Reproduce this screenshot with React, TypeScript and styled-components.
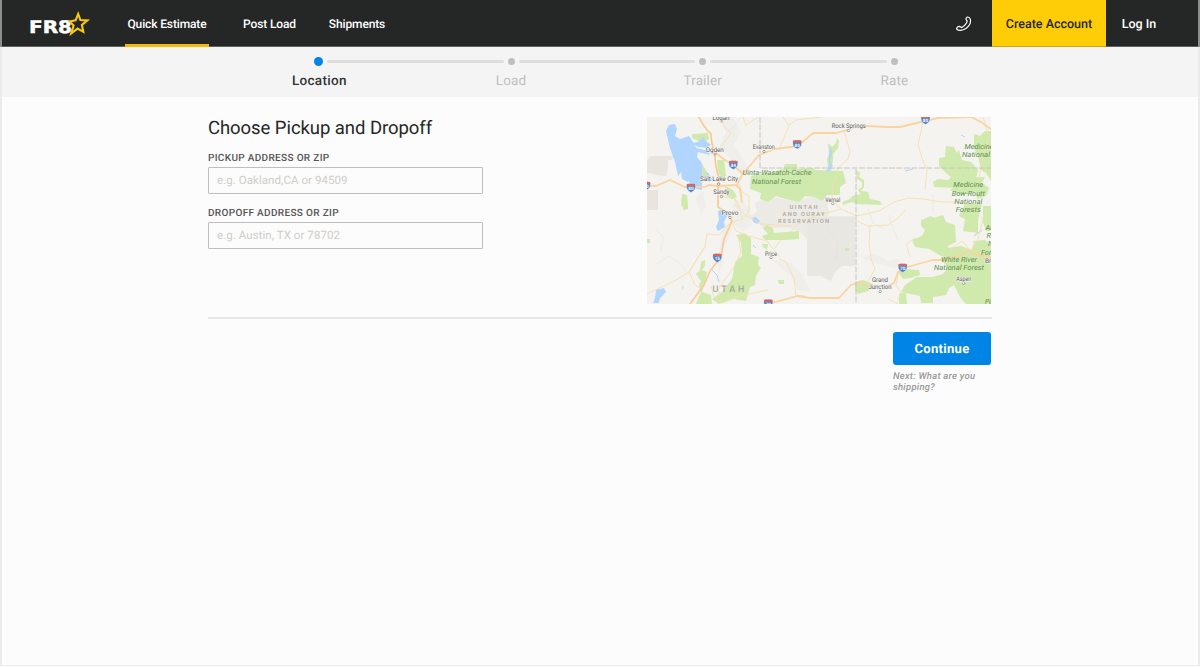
import React from "react";
import styled, { createGlobalStyle } from "styled-components";

const GlobalStyle = createGlobalStyle`
  *, *::before, *::after { box-sizing: border-box; }
  html, body { margin: 0; padding: 0; background: #fcfcfc; }
  body { font-family: Roboto, "Liberation Sans", sans-serif; color: #252726; overflow: hidden; text-rendering: geometricPrecision; }
  button, input { text-rendering: inherit; }
`;

const Page = styled.div`
  height: 666px;
  display: flex;
  flex-direction: column;
  border: solid #ebebeb;
  border-width: 0 2px 1px;
  background: #fcfcfc;
`;

const Header = styled.header`
  height: 47px;
  margin: 0 -2px;
  padding: 0 26px 0 28px;
  flex: none;
  display: flex;
  align-items: stretch;
  background: #252726;
  border: solid #8c8d8c;
  border-width: 0 2px;
  box-shadow: inset 0 -1px 0 #5e5f5e;
`;

const Logo = styled.svg`
  width: 62px;
  height: 46px;
  margin-right: 33px;
  flex: none;
`;

const Nav = styled.nav`
  display: flex;
  gap: 32px;
`;

const NavLink = styled.a<{ $active?: boolean; $width: number }>`
  width: ${(p) => p.$width}px;
  height: 47px;
  display: flex;
  align-items: center;
  justify-content: center;
  padding-top: ${(p) => (p.$active ? 4 : 1)}px;
  border-bottom: ${(p) => (p.$active ? "3px solid #f5b90c" : "0")};
  color: #fff;
  font-size: 12px;
  font-weight: 500;
  letter-spacing: -0.13px;
  white-space: nowrap;
`;

const Actions = styled.div`
  display: flex;
  align-items: stretch;
  margin-left: auto;
`;

const Phone = styled.svg`
  width: 18px;
  height: 18px;
  margin: 15px 19px 0 0;
`;

const CreateAccount = styled.button`
  width: 114px;
  border: 0;
  padding: 2px 0 0;
  background: #ffcd08;
  box-shadow: inset 0 -1px 0 #c9a520;
  color: #252726;
  font: 500 12.5px Roboto, sans-serif;
  letter-spacing: 0;
`;

const LogIn = styled.a`
  width: 66px;
  display: flex;
  align-items: center;
  justify-content: center;
  padding-top: 2px;
  color: #fff;
  font-size: 12.5px;
  font-weight: 500;
  letter-spacing: 0;
`;

const Progress = styled.section`
  height: 50px;
  flex: none;
  padding-top: 9px;
  background: #f4f4f4;
`;

const Track = styled.div`
  display: flex;
  align-items: center;
  width: 584px;
  height: 11px;
  margin-left: 312px;
`;

const Dot = styled.span<{ $active?: boolean }>`
  width: ${(p) => (p.$active ? 9 : 7)}px;
  height: ${(p) => (p.$active ? 9 : 7)}px;
  flex: none;
  border-radius: 50%;
  background: ${(p) => (p.$active ? "#0084e6" : "#bfbfbf")};
`;

const Bar = styled.span`
  flex: 1;
  height: 3px;
  margin: 0 4px;
  border-radius: 2px;
  background: #dedede;
`;

const StepLabels = styled.div`
  display: grid;
  grid-template-columns: repeat(4, 191.7px);
  margin: 6px 0 0 221.5px;
`;

const StepLabel = styled.span<{ $active?: boolean }>`
  text-align: center;
  font-size: 13.5px;
  line-height: 17px;
  font-weight: ${(p) => (p.$active ? 500 : 400)};
  letter-spacing: ${(p) => (p.$active ? 0.3 : 0.1)}px;
  color: ${(p) => (p.$active ? "#333" : "#c0c0c0")};
`;

const Main = styled.main`
  width: 784px;
  margin-left: 206px;
  padding-top: 20px;
`;

const Columns = styled.div`
  display: flex;
  justify-content: space-between;
  height: 202px;
  border-bottom: 2px solid #e7e7e7;
`;

const Form = styled.form`
  width: 275px;
`;

const Title = styled.h1`
  margin: 0 0 13px;
  font-size: 18.5px;
  line-height: 22px;
  font-weight: 400;
  letter-spacing: -0.06px;
  white-space: nowrap;
`;

const Field = styled.label`
  display: block;
  height: 55px;
`;

const FieldLabel = styled.span`
  display: block;
  height: 15px;
  padding-top: 1px;
  font-size: 10px;
  line-height: 12px;
  font-weight: 500;
  letter-spacing: 0.33px;
  color: #555;
`;

const Input = styled.input`
  display: block;
  width: 275px;
  height: 27px;
  padding: 0 8px 1px;
  border: 1px solid #bfbfbf;
  border-radius: 1px;
  outline: 0;
  background: #fcfcfc;
  font: 400 11.5px Roboto, sans-serif;
  letter-spacing: 0.06px;
  &::placeholder { color: #d0ccc8; opacity: 1; }
`;

const MapView = styled.svg`
  display: block;
  width: 344px;
  height: 187px;
  flex: none;
  margin-right: 1px;
`;

const Footer = styled.div`
  display: flex;
  flex-direction: column;
  width: 99px;
  margin: 13px 0 0 auto;
`;

const Continue = styled.button`
  width: 98px;
  height: 33px;
  border: 0;
  border-radius: 3px;
  padding: 2px 0 0;
  background: #0084e6;
  color: #fff;
  font: 700 13px Roboto, sans-serif;
  letter-spacing: 0.3px;
`;

const Hint = styled.p`
  margin: 6px 0 0;
  font-size: 9.5px;
  line-height: 11px;
  font-weight: 500;
  font-style: italic;
  letter-spacing: 0.25px;
  color: #999;
`;

const TownText = styled.text`
  font: 400 6.5px Roboto, sans-serif;
  fill: #5a5a5a;
  stroke: #f5f4f1;
  stroke-width: 1.2px;
  paint-order: stroke;
  text-anchor: middle;
`;

const ForestText = styled.text`
  font: italic 400 7.2px Roboto, sans-serif;
  fill: #5f8f50;
  text-anchor: middle;
`;

const RegionText = styled.text<{ $size?: number }>`
  font: 500 ${(p) => p.$size ?? 5.7}px Roboto, sans-serif;
  fill: #aaa59c;
  text-anchor: middle;
`;

const towns = [
  { name: "Logan", x: 721, y: 119.6, w: 17, dot: [721.5, 121] },
  { name: "Ogden", x: 714.7, y: 151.7, w: 18, dot: [715, 154] },
  { name: "Evanston", x: 763.7, y: 149.3, w: 22, dot: [764, 151.5] },
  { name: "Salt Lake City", x: 719, y: 181, w: 38, dot: [718.7, 184] },
  { name: "Sandy", x: 721.3, y: 193.8, w: 16, dot: [721.5, 196.5] },
  { name: "Provo", x: 730, y: 214.5, w: 17, dot: [730, 217.5] },
  { name: "Price", x: 771, y: 255.8, w: 12, dot: [771, 257.5] },
  { name: "Rock Springs", x: 848.7, y: 128.3, w: 34, dot: [848.5, 130.5] },
  { name: "Vernal", x: 832.7, y: 201.5, w: 15, dot: [832.8, 203.5] },
  { name: "Grand", x: 880, y: 281.8, w: 16 },
  { name: "Junction", x: 880, y: 288.6, w: 23, dot: [880.2, 291.5] },
  { name: "Aspen", x: 963.7, y: 281.3, w: 15, dot: [963.7, 283.3] },
  { name: "Breckenridge", x: 1004, y: 263, w: 38 },
];

const forests = [
  { name: "Uinta-Wasatch-Cache", x: 777, y: 175.3, w: 69 },
  { name: "National Forest", x: 776.6, y: 183.5, w: 49 },
  { name: "Medicine", x: 979, y: 149, w: 29 },
  { name: "National", x: 976, y: 157, w: 28 },
  { name: "Medicine", x: 968.3, y: 187.3, w: 30 },
  { name: "Bow-Routt", x: 968.3, y: 195.7, w: 33 },
  { name: "National", x: 968.3, y: 203.8, w: 28 },
  { name: "Forests", x: 968.3, y: 212, w: 25 },
  { name: "White River", x: 959, y: 261.8, w: 36 },
  { name: "National Forest", x: 959, y: 270, w: 50 },
  { name: "Arapaho", x: 999, y: 230, w: 27 },
  { name: "Roosevelt", x: 1002, y: 238, w: 31 },
  { name: "National", x: 1002, y: 246, w: 28 },
  { name: "Forest", x: 991, y: 254.5, w: 20 },
  { name: "Pike", x: 991, y: 303.5, w: 12 },
];

const shields = [
  { n: "80", x: 797.2, y: 144.5 },
  { n: "84", x: 733.3, y: 165 },
  { n: "80", x: 691, y: 188 },
  { n: "80", x: 646, y: 186 },
  { n: "15", x: 717.3, y: 258 },
  { n: "80", x: 925.5, y: 120 },
  { n: "70", x: 902.7, y: 268 },
  { n: "70", x: 768.3, y: 303.7 },
];

const Shield = ({ n, x, y }: { n: string; x: number; y: number }) => (
  <g transform={`translate(${x} ${y})`}>
    <path d="M-4-3.8Q0-5 4-3.8Q6 1.8 0 4.5Q-6 1.8-4-3.8Z" fill="#4f82c4" stroke="#e8eef5" strokeWidth=".5" />
    <path d="M-4-4Q-2-4.6 0-4Q2-4.6 4-4L4.4-2H-4.4Z" fill="#dc6460" />
    <text y="2.4" textAnchor="middle" fontFamily="Roboto" fontSize="4.6" fontWeight="700" fill="#fff">{n}</text>
  </g>
);

const RouteMap = () => (
  <MapView viewBox="647 117 344 187" role="img" aria-label="Map">
    <rect x="647" y="117" width="344" height="187" fill="#f4f3f0" />
    <g fill="#e8e5df">
      <path d="M647 160L650 156H673L672 160L668 160V168L666 176L656 175L650 173H647Z" />
      <path d="M647 190H658V210H647Z" />
      <path d="M755 203L770 197L796 201L815 196L827 200L829 216H854V222H807V239L800 232L789 228H764L756 222L750 216L757 212Z" opacity=".7" />
      <path d="M807 217H855V266H842L835 272L831 281L821 276H807Z" opacity=".9" />
    </g>
    <g fill="#eae8e3" opacity=".45">
      <path d="M720 118L732 116L741 131L734 145L741 157L751 171L742 176L733 163L720 145L726 132Z" />
      <path d="M734 198L750 207L752 226L743 231L731 222Z" />
      <path d="M724 226L731 221L730 236L724 246L722 266L718 276L719 250Z" />
      <path d="M772 260L791 263L803 275L810 292L798 290L790 275Z" />
      <path d="M860 257L875 254L888 261L899 259L898 269L879 264Z" />
      <path d="M696 198L703 191L706 207L701 214Z" />
    </g>
    <g fill="#d0e9ad">
      <path d="M692 134L708 133L709 139L702 143L692 138Z" />
      <path d="M717 160L724 160L726 176L721 179L718 171Z" />
      <path d="M702 166L705 169L707 178L702 177Z" />
      <path d="M682 194L687 195L688 205L685 209L681 205Z" />
      <path d="M683 205L688 205L688 209L683 210Z" />
      <path d="M725 186L733 190L737 197L733 199L725 195Z" />
      <path d="M751 176L759 174L770 173L783 169L785 164L797 164L797 169L813 168L815 170L843 171L846 183L840 187V195H827L822 201L815 197L805 196L799 202L786 199L776 196L768 202L760 199L761 193L750 189Z" />
      <path d="M828 143L832 147L836 143L837 138L839 141L838 148L833 154L833 162L828 170L827 159L829 154Z" />
      <path d="M856 171L860 172L859 177L864 180V187L861 191L868 192L870 199L880 201L882 205L857 204L852 202L843 205L842 202L850 199L852 196L861 194L858 190L862 187V182L857 179Z" />
      <path d="M939 158L945 157L946 146L954 147L957 153L959 150L962 160L971 162L978 170L976 178L976 187L968 187L958 184L957 188L934 187L933 182L938 179L948 180L951 177L946 173L939 166Z" />
      <path d="M974 134L980 136L985 131H991V181L986 173L981 170L978 156L974 148Z" />
      <path d="M976 177H985L982 183L989 188L986 196L977 199L976 192L961 195L950 190L958 184L969 187Z" />
      <path d="M921 220L931 216L934 218L943 215L946 222L955 225L956 242L948 246L949 255L941 256L929 249L915 247L912 240L922 236L925 230L921 226Z" />
      <path d="M965 204L982 204L980 210L978 221L978 233L963 231L965 219L959 216Z" />
      <path d="M983 206H991V231H986L983 222Z" />
      <path d="M948 248L961 246L972 250L974 241L985 240L991 245V304H966L960 297L954 285L949 288L946 295L933 297L933 303L921 303L920 296L901 292L905 285L917 277L933 277L943 274L948 267L941 260Z" />
      <path d="M898 272L907 269L919 270L920 275L911 278L903 279Z" />
      <path d="M855 282L863 280L873 284L875 287L868 291L858 294L855 290Z" />
      <path d="M899 294L906 292L907 304H899Z" />
      <path d="M736 235L744 233L751 238L751 254L759 257L758 265L761 268L756 276L755 285L750 287L746 301L734 299L719 304L712 299L722 292L732 279L735 262L742 256L741 243Z" />
      <path d="M701 262L705 260L705 266L702 270L707 272L705 283L702 292L711 295L712 304H696L701 292L699 285L701 281L696 274L700 270Z" />
      <path d="M763 228L767 225L773 228L774 233L799 231V239L785 240H765L762 236L768 234Z" />
      <path d="M762 244L768 244L767 250L763 247Z" />
      <path d="M778 280H784V284H779Z M682 285L684 287L682 290Z M647 239H650V243H647Z" />
      <path d="M845 248H849V251H845Z" />
    </g>
    <g fill="#b0d5ff">
      <path d="M666 131L669 125L675 124L677 129L675 136L680 139L689 136L693 142L698 151L697 157L701 162L703 166L705 170L708 173L713 180L709 182L704 177L702 183L702 190L697 189L692 186L687 179L681 172L678 176L675 162L670 148Z" />
      <path d="M692 143L698 142L703 137L706 141L711 145L706 148L698 147Z M690 147L697 148L708 151L710 155L698 152Z" />
      <path d="M681 173L688 176L688 182L682 179Z" />
      <path d="M718 211L723 209L728 214L724 222L725 227L718 231L716 227L719 220Z" />
      <path d="M656 290L664 288L666 292L660 298L659 303L653 303L655 298Z" />
      <path d="M752 218L756 217L760 221L757 224L753 222Z" />
      <path d="M829 152L831 146L832 154L830 161L833 165L830 171L826 172L829 165Z" opacity=".85" />
    </g>
    <path d="M702 166L705 168L707 176L702 177Z" fill="#d0e9ad" />
    <g fill="none" stroke="#a9cdef" strokeWidth=".9">
      <path d="M712 270L717 275L719 282M905 171L913 169M961 135L965 137M974 236L982 230M753 245L756 248" />
    </g>
    <g fill="none" stroke="#dfdedb" strokeWidth=".5">
      <path d="M740 118L735 126L728 131M656 229L663 237L661 252M827 227L838 244L836 260M868 209L873 223L884 229M933 195L933 214M898 240L893 228L889 215M657 264L669 256L681 264L687 273" />
    </g>
    <g fill="none" stroke="#f4e0ae" strokeWidth=".9">
      <path d="M719 117L725 128L731 133L723 144L716 152M743 117L746 125L758 117M783 117L789 126L779 149M789 125L796 120L822 117" />
      <path d="M844 131L850 151L848 159L838 168L833 185L832 199L841 209L857 216L879 211L894 202L908 198L923 199L941 202L958 202L970 207L983 219L978 239L971 250" />
      <path d="M923 122L918 145L922 158L927 171L925 189M855 220L868 226L888 225L898 218L905 210M870 226L869 243L871 259L875 269L868 281" />
      <path d="M731 221L736 231L749 236L767 241L773 249L780 257M774 249L781 240L791 231L799 223L816 216L841 209M735 204L744 214L761 224L792 226" />
      <path d="M739 184L742 192L749 196L749 210L745 218M719 186L724 197L735 199L739 207L743 219L731 222M647 294L676 280L689 272L705 246L707 234L719 235L729 224" />
      <path d="M705 247L689 272L695 285L700 288M711 286L714 297L722 303L735 297L768 290M738 235L741 252L734 267L718 289L721 299M779 259L786 262L794 278L796 295L805 296" />
      <path d="M949 258L951 249L962 241L970 250L972 253M910 257L906 244L915 238M983 117L989 137L984 151L979 178M888 299L898 304M898 276L896 285L901 293L898 300" />
    </g>
    <g fill="none" strokeLinejoin="round" strokeLinecap="round">
      <g stroke="#fbd3a0" strokeWidth="1.8">
        <path d="M699 117Q704 128 711 134Q711 144 715 152Q714 162 719 178L718 187L718 207L726 212L732 221L724 239L721 257L710 271L704 285L690 304" />
        <path d="M647 186H656L670 180L685 187H704L709 185L718 186L737 185L742 175L759 155L775 149L798 146L813 133H836L851 129Q859 124 866 126L887 127L900 127L925 121L938 118L971 117L981 122L991 129" />
        <path d="M715 152L722 158L733 165L742 173M737 186L740 189L742 202" />
        <path d="M768 304L783 300L797 296L810 298L839 298L851 285L860 282L872 287L886 287L894 283L898 272L907 267L933 260L944 260L958 256L969 251L977 255L991 257" />
      </g>
      <path d="M699 117Q704 128 711 134Q711 144 715 152Q714 162 719 178L718 187L718 207L726 212L732 221L724 239L721 257L710 271L704 285L690 304" stroke="#f5bd85" strokeWidth=".5" />
    </g>
    <path d="M760 117V168H991M856 169V304" fill="none" stroke="#c3c2bf" strokeWidth=".9" strokeDasharray="6 1.5" />
    {shields.map((s) => <Shield key={`${s.x}-${s.y}`} {...s} />)}
    {towns.map((t) => (
      <g key={t.name}>
        {t.dot && <circle cx={t.dot[0]} cy={t.dot[1]} r="1.2" fill="#fff" stroke="#777" strokeWidth=".65" />}
        <TownText x={t.x} y={t.y} textLength={t.w} lengthAdjust="spacingAndGlyphs">{t.name}</TownText>
      </g>
    ))}
    {forests.map((f) => (
      <ForestText key={`${f.name}-${f.y}`} x={f.x} y={f.y} textLength={f.w} lengthAdjust="spacingAndGlyphs">{f.name}</ForestText>
    ))}
    <RegionText x="803.5" y="209.2" textLength="28">UINTAH</RegionText>
    <RegionText x="803.5" y="216" textLength="42">AND OURAY</RegionText>
    <RegionText x="803.5" y="222.7" textLength="51">RESERVATION</RegionText>
    <RegionText x="728.5" y="291.8" textLength="32" $size={9}>UTAH</RegionText>
  </MapView>
);

const steps = ["Location", "Load", "Trailer", "Rate"];

export default function App() {
  return (
    <>
      <GlobalStyle />
      <Page>
        <Header>
          <Logo viewBox="30 0 62 46" aria-label="FR8Star">
            <text x="29" y="33" textLength="43" lengthAdjust="spacingAndGlyphs" fontFamily="DejaVu Sans" fontWeight="700" fontSize="17.3" fill="#fff" stroke="#fff" strokeWidth=".5">FR8</text>
            <path d="M78.2 14L80.4 20L87.4 20.4L81.9 25L83.3 31.8L77.5 28.6L71.2 33.5L73.6 25.5L69.6 21.4L75.6 20.4Z" fill="#252726" stroke="#f7cb0c" strokeWidth="2.1" />
          </Logo>
          <Nav>
            <NavLink $active $width={84}>Quick Estimate</NavLink>
            <NavLink $width={57}>Post Load</NavLink>
            <NavLink $width={54}>Shipments</NavLink>
          </Nav>
          <Actions>
            <Phone viewBox="0 0 18 18" aria-label="Phone">
              <path d="M12.4 2Q14.6 1.8 15.4 4.4Q16.2 8.3 13 11.7Q9.8 15.3 5.2 15.4Q1.6 15.3 1.6 13.2Q2.6 11.3 4.8 11.4L6.5 12.6Q8.6 11.6 10.3 9.6Q12 7.7 12.2 5.9L11 4.7Q10.7 2.8 12.4 2Z" fill="none" stroke="#fff" strokeWidth="1.2" strokeLinejoin="round" strokeLinecap="round" />
            </Phone>
            <CreateAccount>Create Account</CreateAccount>
            <LogIn>Log In</LogIn>
          </Actions>
        </Header>
        <Progress>
          <Track>
            {steps.map((s, i) => (
              <React.Fragment key={s}>
                {i > 0 && <Bar />}
                <Dot $active={i === 0} />
              </React.Fragment>
            ))}
          </Track>
          <StepLabels>
            {steps.map((s, i) => <StepLabel key={s} $active={i === 0}>{s}</StepLabel>)}
          </StepLabels>
        </Progress>
        <Main>
          <Columns>
            <Form>
              <Title>Choose Pickup and Dropoff</Title>
              <Field>
                <FieldLabel>PICKUP ADDRESS OR ZIP</FieldLabel>
                <Input placeholder="e.g. Oakland,CA or 94509" />
              </Field>
              <Field>
                <FieldLabel>DROPOFF ADDRESS OR ZIP</FieldLabel>
                <Input placeholder="e.g. Austin, TX or 78702" />
              </Field>
            </Form>
            <RouteMap />
          </Columns>
          <Footer>
            <Continue>Continue</Continue>
            <Hint>Next: What are you shipping?</Hint>
          </Footer>
        </Main>
      </Page>
    </>
  );
}
